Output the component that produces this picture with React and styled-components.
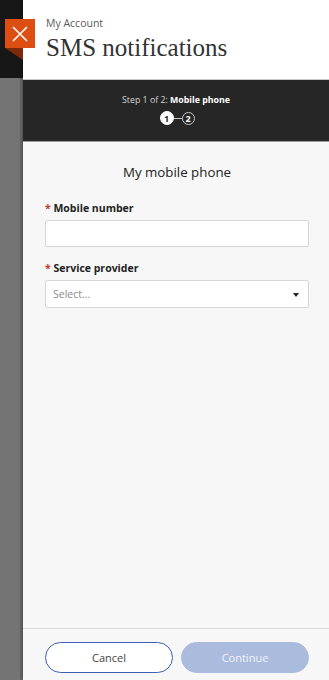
import React from "react";
import styled, { createGlobalStyle } from "styled-components";

const Global = createGlobalStyle`
  html, body { margin: 0; padding: 0; }
  body { font-family: "Open Sans", "Liberation Sans", sans-serif; background: #747474; }
  * { box-sizing: border-box; }
`;

const Page = styled.div`
  display: flex;
  width: 329px;
  height: 680px;
  position: relative;
  overflow: hidden;
`;

const Backdrop = styled.div`
  width: 23px;
  flex: none;
  display: flex;
  flex-direction: column;
`;

const BackdropTop = styled.div`
  height: 78px;
  background: #171717;
`;

const BackdropRest = styled.div`
  flex: 1;
  background: #747474;
  border-right: 3px solid #686868;
`;

const Panel = styled.div`
  flex: 1;
  display: flex;
  flex-direction: column;
  background: #f7f7f7;
  box-shadow: -1px 0 3px rgba(0, 0, 0, 0.25);
  position: relative;
`;

const Header = styled.header`
  height: 80px;
  flex: none;
  background: #fff;
  border-bottom: 1px solid #c8c8c8;
  padding: 15px 20px 0 23px;
`;

const Eyebrow = styled.div`
  font-size: 10.5px;
  color: #5a5a5a;
  line-height: 16px;
`;

const Title = styled.h1`
  margin: 3px 0 0;
  font-family: "Liberation Serif", "DejaVu Serif", serif;
  font-weight: normal;
  font-size: 25px;
  line-height: 28px;
  color: #333;
`;

const CloseButton = styled.button`
  position: absolute;
  left: 5px;
  top: 19px;
  width: 30px;
  height: 29px;
  border: none;
  padding: 0;
  background: #dc4e12;
  display: flex;
  align-items: center;
  justify-content: center;
  cursor: pointer;
  &::after {
    content: "";
    position: absolute;
    left: 0;
    top: 29px;
    width: 0;
    height: 0;
    border-top: 12px solid #7d2a0a;
    border-left: 18px solid transparent;
  }
`;

const Stepper = styled.div`
  height: 62px;
  flex: none;
  background: #262626;
  border-bottom: 1px solid #9a9a9a;
  display: flex;
  flex-direction: column;
  align-items: center;
  padding-top: 13px;
`;

const StepText = styled.div`
  font-size: 8.8px;
  color: #d4d4d4;
  line-height: 14px;
  b { color: #fff; font-weight: 700; }
`;

const Dots = styled.div`
  display: flex;
  align-items: center;
  margin-top: 4px;
  margin-left: 2px;
`;

const Dot = styled.span`
  width: ${(p) => (p.$active ? 14 : 13)}px;
  height: ${(p) => (p.$active ? 14 : 13)}px;
  border-radius: 50%;
  display: flex;
  align-items: center;
  justify-content: center;
  font-size: 9px;
  font-weight: 700;
  background: ${(p) => (p.$active ? "#fff" : "transparent")};
  color: ${(p) => (p.$active ? "#262626" : "#fff")};
  border: 1px solid ${(p) => (p.$active ? "#fff" : "#c8c8c8")};
`;

const DotLine = styled.span`
  width: 8px;
  height: 1px;
  background: #c8c8c8;
`;

const Content = styled.main`
  flex: 1;
  padding: 20px 20px 0 22px;
`;

const SectionTitle = styled.h2`
  margin: 0 0 18px;
  text-align: center;
  font-size: 13.3px;
  font-weight: 500;
  color: #222;
  line-height: 20px;
`;

const Field = styled.div`
  margin-bottom: 13px;
`;

const Label = styled.label`
  display: block;
  font-size: 10.5px;
  font-weight: 700;
  color: #222;
  line-height: 16px;
  margin-bottom: 4px;
  &::before {
    content: "* ";
    color: #c0392b;
  }
`;

const Input = styled.div`
  height: 27px;
  background: #fff;
  border: 1px solid #d6d6d6;
  border-radius: 2px;
`;

const Select = styled(Input)`
  height: 28px;
  display: flex;
  align-items: center;
  justify-content: space-between;
  padding: 0 7px 0 7px;
  font-size: 10.5px;
  color: #8a8a8a;
`;

const Caret = styled.span`
  width: 0;
  height: 0;
  border-left: 3px solid transparent;
  border-right: 3px solid transparent;
  border-top: 4px solid #222;
  margin-right: 2px;
  margin-top: 1px;
`;

const Footer = styled.footer`
  flex: none;
  height: 52px;
  border-top: 1px solid #dcdcdc;
  display: grid;
  grid-template-columns: 1fr 1fr;
  gap: 8px;
  padding: 13px 20px 0 22px;
`;

const Button = styled.button`
  height: 31px;
  border-radius: 16px;
  font-family: inherit;
  font-size: 11px;
  border: 1px solid ${(p) => (p.$primary ? "#aabbdd" : "#3a5fb5")};
  background: ${(p) => (p.$primary ? "#aabbdd" : "#fff")};
  color: ${(p) => (p.$primary ? "#eef2fa" : "#444")};
`;

export default function App() {
  return (
    <Page>
      <Global />
      <Backdrop>
        <BackdropTop />
        <BackdropRest />
      </Backdrop>
      <Panel>
        <Header>
          <Eyebrow>My Account</Eyebrow>
          <Title>SMS notifications</Title>
        </Header>
        <Stepper>
          <StepText>
            Step 1 of 2: <b>Mobile phone</b>
          </StepText>
          <Dots>
            <Dot $active>1</Dot>
            <DotLine />
            <Dot>2</Dot>
          </Dots>
        </Stepper>
        <Content>
          <SectionTitle>My mobile phone</SectionTitle>
          <Field>
            <Label>Mobile number</Label>
            <Input />
          </Field>
          <Field>
            <Label>Service provider</Label>
            <Select>
              <span>Select...</span>
              <Caret />
            </Select>
          </Field>
        </Content>
        <Footer>
          <Button>Cancel</Button>
          <Button $primary>Continue</Button>
        </Footer>
      </Panel>
      <CloseButton aria-label="Close">
        <svg width="18" height="18" viewBox="0 0 18 18">
          <path d="M2 2 L16 16 M16 2 L2 16" stroke="#fff" strokeWidth="1.6" fill="none" />
        </svg>
      </CloseButton>
    </Page>
  );
}
